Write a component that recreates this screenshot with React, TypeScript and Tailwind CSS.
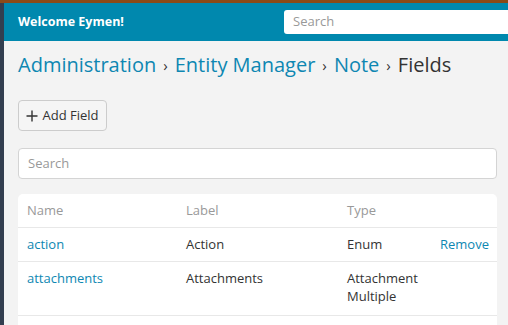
const rows = [
  { name: "action", label: "Action", type: ["Enum"], remove: true },
  { name: "attachments", label: "Attachments", type: ["Attachment", "Multiple"], remove: false },
];

export default function App() {
  return (
    <div className="flex h-[325px] flex-col overflow-hidden bg-[#f3f3f3] font-['Open_Sans',sans-serif]">
      <div className="h-[3px] shrink-0 bg-[#8b4a17]" />
      <div className="flex flex-1">
        <div className="w-[4px] shrink-0 bg-[#323e4f]" />
        <div className="flex min-w-0 flex-1 flex-col">
          {/* Navbar */}
          <div className="flex h-[38px] shrink-0 items-center bg-[#0088ae]">
            <span className="w-[280px] shrink-0 pl-[14px] text-[12.5px] font-bold text-white">Welcome Eymen!</span>
            <div className="flex h-[24px] flex-1 items-center rounded-l-[3px] bg-white pl-[9px] text-[13px] text-[#999]">
              Search
            </div>
          </div>

          <div className="pl-[14px] pr-[11px]">
            {/* Breadcrumb */}
            <div className="mt-[10px] flex items-center text-[20px] leading-[28px] text-[#0e87b2]">
              <span>Administration</span>
              <span className="mx-[7px] text-[15px] text-[#333]">›</span>
              <span>Entity Manager</span>
              <span className="mx-[7px] text-[15px] text-[#333]">›</span>
              <span>Note</span>
              <span className="mx-[7px] text-[15px] text-[#333]">›</span>
              <span className="text-[#333]">Fields</span>
            </div>

            <button className="mt-[21px] flex h-[31px] w-[89px] items-center justify-center gap-[4px] rounded-[4px] border border-[#cccccc] bg-[#f5f5f5] text-[13px] text-[#333]">
              <svg width="12" height="12" viewBox="0 0 12 12" stroke="#333" strokeWidth="1.4">
                <path d="M6 0.5v11M0.5 6h11" />
              </svg>
              Add Field
            </button>

            <div className="mt-[17px] flex h-[31px] items-center rounded-[4px] border border-[#d4d4d4] bg-white pl-[9px] text-[13px] text-[#999]">
              Search
            </div>

            {/* Table */}
            <div className="mt-[15px] rounded-t-[5px] bg-white text-[13px]">
              <div className="grid h-[34px] grid-cols-[159px_161px_1fr_auto] items-center border-b border-[#e8e8e8] text-[#999]">
                <div className="pl-[9px]">Name</div>
                <div className="pl-[9px]">Label</div>
                <div className="pl-[9px]">Type</div>
                <div />
              </div>
              {rows.map((r) => (
                <div
                  key={r.name}
                  className={
                    r.type.length > 1
                      ? "grid grid-cols-[159px_161px_1fr_auto] items-start border-b border-[#e8e8e8] pb-[10px] pt-[7px] leading-[18px] text-[#333]"
                      : "grid grid-cols-[159px_161px_1fr_auto] items-start border-b border-[#e8e8e8] pb-[8px] pt-[7px] leading-[18px] text-[#333]"
                  }
                >
                  <div className="pl-[9px] text-[#0e87b2]">{r.name}</div>
                  <div className="pl-[9px]">{r.label}</div>
                  <div className="pl-[9px]">
                    {r.type.map((t) => (
                      <div key={t}>{t}</div>
                    ))}
                  </div>
                  <div className="pr-[8px] text-[#0e87b2]">{r.remove ? "Remove" : ""}</div>
                </div>
              ))}
              <div className="h-[20px]" />
            </div>
          </div>
        </div>
      </div>
    </div>
  );
}
